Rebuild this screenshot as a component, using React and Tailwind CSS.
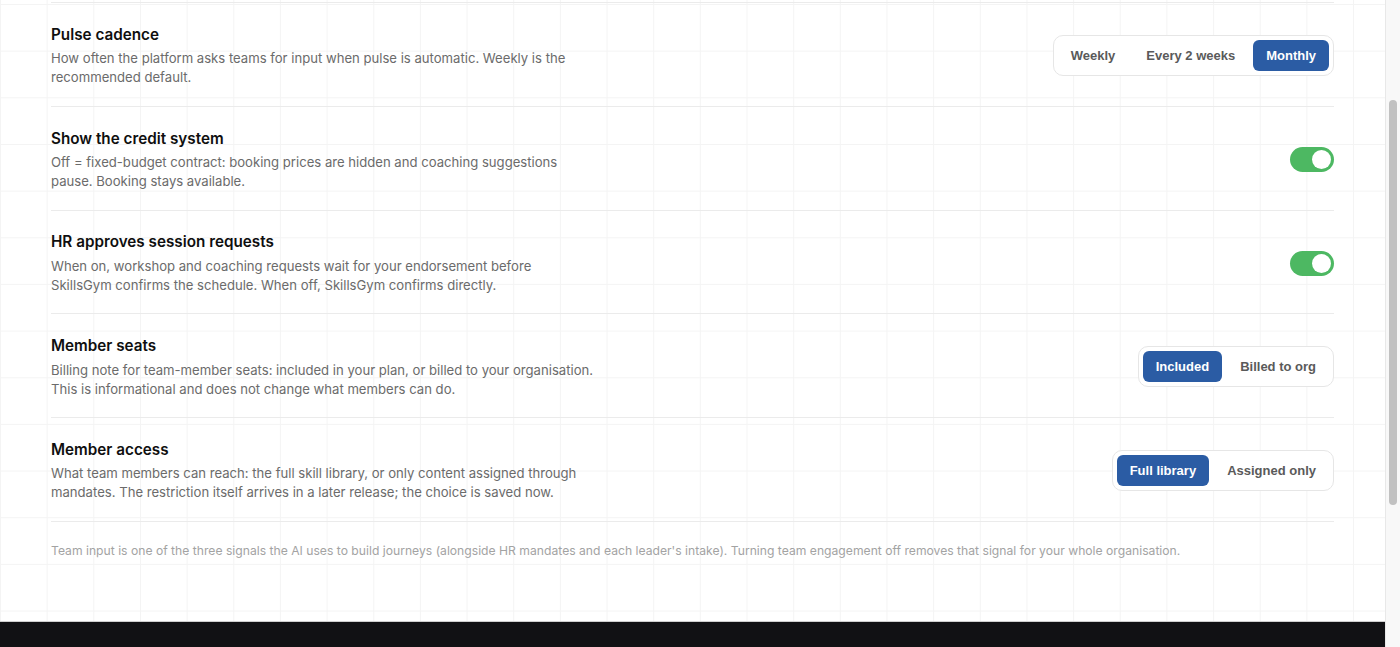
const rows = [
  {
    title: 'Pulse cadence',
    desc: 'How often the platform asks teams for input when pulse is automatic. Weekly is the recommended default.',
    control: { type: 'seg', options: ['Weekly', 'Every 2 weeks', 'Monthly'], active: 2 },
  },
  {
    title: 'Show the credit system',
    desc: 'Off = fixed-budget contract: booking prices are hidden and coaching suggestions pause. Booking stays available.',
    control: { type: 'toggle' },
  },
  {
    title: 'HR approves session requests',
    desc: 'When on, workshop and coaching requests wait for your endorsement before SkillsGym confirms the schedule. When off, SkillsGym confirms directly.',
    control: { type: 'toggle' },
  },
  {
    title: 'Member seats',
    desc: 'Billing note for team-member seats: included in your plan, or billed to your organisation. This is informational and does not change what members can do.',
    control: { type: 'seg', options: ['Included', 'Billed to org'], active: 0 },
  },
  {
    title: 'Member access',
    desc: 'What team members can reach: the full skill library, or only content assigned through mandates. The restriction itself arrives in a later release; the choice is saved now.',
    control: { type: 'seg', options: ['Full library', 'Assigned only'], active: 0 },
  },
];

function Segmented({ options, active }) {
  return (
    <div className="flex items-center gap-[5px] p-1 rounded-[10px] border border-[#e6e6e6] bg-white">
      {options.map((o, i) => (
        <button
          key={o}
          className={
            i === active
              ? 'h-[31px] px-[13px] rounded-[6px] bg-[#2b5ca4] text-white text-[13px] font-bold font-["Liberation_Sans",Arial,sans-serif]'
              : 'h-[31px] px-[13px] rounded-[6px] text-[#5a5a5a] text-[13px] font-bold font-["Liberation_Sans",Arial,sans-serif]'
          }
        >
          {o}
        </button>
      ))}
    </div>
  );
}

function Toggle() {
  return (
    <div className="w-[44px] h-[25px] rounded-full bg-[#4db862] flex items-center justify-end pr-[3px]">
      <div className="w-[19px] h-[19px] rounded-full bg-white" />
    </div>
  );
}

export default function App() {
  return (
    <div className="flex h-[647px] w-[1400px] overflow-hidden bg-white font-['Inter',sans-serif]">
      <div className="flex-1 flex flex-col">
        <div className="flex-1 px-[51px] pt-[2px] bg-[image:linear-gradient(to_right,#f4f4f4_1px,transparent_1px),linear-gradient(to_bottom,#f4f4f4_1px,transparent_1px)] bg-[size:46.67px_46.67px] bg-[position:0_4px]">
          {rows.map((r) => (
            <div key={r.title} className="flex items-center justify-between border-t-[1.5px] border-[#ebebeb] pt-[20.75px] pb-[18.7px]">
              <div className="w-[543.5px]">
                <div className="text-[15.25px] leading-[22px] font-semibold text-[#0f0f0f]">{r.title}</div>
                <div className="mt-[3.4px] text-[13.12px] leading-[19px] text-[#6b6b6b]">{r.desc}</div>
              </div>
              {r.control.type === 'seg' ? <Segmented {...r.control} /> : <Toggle />}
            </div>
          ))}
          <div className="border-t-[1.5px] border-[#ebebeb] pt-5 text-[12.16px] leading-[18px] text-[#a3a3a3]">
            Team input is one of the three signals the AI uses to build journeys (alongside HR mandates and each leader's intake). Turning team engagement off removes that signal for your whole organisation.
          </div>
        </div>
        <div className="h-[26px] bg-[#111114] border-t border-[#cfcfcf]" />
      </div>
      <div className="w-[15px] bg-[#f8f8f8] border-l border-[#e8e8e8] pt-[100px] flex justify-center">
        <div className="w-[8px] h-[405px] rounded-full bg-[#c1c1c1]" />
      </div>
    </div>
  );
}
